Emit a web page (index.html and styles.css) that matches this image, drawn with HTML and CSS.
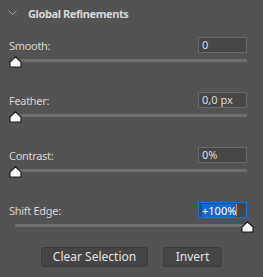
FILE: index.html
```html
<!DOCTYPE html>
<html lang="en">
  <head>
    <meta charset="UTF-8" />
    <title>Global Refinements</title>
    <link rel="stylesheet" href="styles.css">
  </head>
  <body>
    <div class="panel">
      <div class="header">
        <svg class="chevron" width="9" height="6" viewBox="0 0 9 6"><path d="M0.5 0.5 L4.5 4.5 L8.5 0.5" fill="none" stroke="#a8a8a8" stroke-width="0.9"/></svg>
        <span class="title">Global Refinements</span>
      </div>

      <div class="group">
        <div class="row">
          <label>Smooth:</label>
          <div class="field">0</div>
        </div>
        <div class="slider">
          <div class="track"></div>
          <svg class="thumb" style="left:0px" width="13" height="12" viewBox="0 0 13 12"><path d="M6.5 0.8 L12 6 L12 11.2 L1 11.2 L1 6 Z" fill="#fff" stroke="#1e1e1e" stroke-width="1.2" stroke-linejoin="round"/></svg>
        </div>
      </div>

      <div class="group">
        <div class="row">
          <label>Feather:</label>
          <div class="field">0,0 px</div>
        </div>
        <div class="slider">
          <div class="track"></div>
          <svg class="thumb" style="left:0px" width="13" height="12" viewBox="0 0 13 12"><path d="M6.5 0.8 L12 6 L12 11.2 L1 11.2 L1 6 Z" fill="#fff" stroke="#1e1e1e" stroke-width="1.2" stroke-linejoin="round"/></svg>
        </div>
      </div>

      <div class="group">
        <div class="row">
          <label>Contrast:</label>
          <div class="field">0%</div>
        </div>
        <div class="slider">
          <div class="track"></div>
          <svg class="thumb" style="left:0px" width="13" height="12" viewBox="0 0 13 12"><path d="M6.5 0.8 L12 6 L12 11.2 L1 11.2 L1 6 Z" fill="#fff" stroke="#1e1e1e" stroke-width="1.2" stroke-linejoin="round"/></svg>
        </div>
      </div>

      <div class="group last">
        <div class="row">
          <label>Shift Edge:</label>
          <div class="field active"><span class="sel">+100%</span><span class="caret"></span></div>
        </div>
        <div class="slider">
          <div class="track"></div>
          <svg class="thumb" style="left:232px" width="13" height="12" viewBox="0 0 13 12"><path d="M6.5 0.8 L12 6 L12 11.2 L1 11.2 L1 6 Z" fill="#fff" stroke="#1e1e1e" stroke-width="1.2" stroke-linejoin="round"/></svg>
        </div>
      </div>

      <div class="buttons">
        <button class="btn wide">Clear Selection</button>
        <button class="btn">Invert</button>
      </div>
    </div>
  </body>
</html>
```

FILE: styles.css
```css
body {
  margin: 0;
  background: #535353;
  font-family: "Noto Sans", sans-serif;
  font-size: 11px;
  color: #d4d4d4;
}
.panel {
  width: 263px;
  height: 277px;
  padding: 0 16px 0 9px;
  box-sizing: border-box;
}
.header {
  height: 26px;
  display: flex;
  align-items: center;
}
.chevron {
  margin-left: -1px;
  margin-right: 11px;
}
.title {
  font-weight: bold;
  font-size: 11px;
  letter-spacing: -0.4px;
  color: #d8d8d8;
}
label {
  letter-spacing: -0.3px;
}
.group {
  margin-top: 11px;
}
.group + .group {
  margin-top: 25px;
}
.row {
  display: flex;
  justify-content: space-between;
  align-items: center;
  height: 16px;
}
.field {
  width: 49px;
  height: 16px;
  box-sizing: border-box;
  border: 1px solid #6a6a6a;
  background: #474747;
  padding: 0 3px;
  line-height: 14px;
  color: #dcdcdc;
  display: flex;
  align-items: center;
}
.field.active {
  border-color: #1473e6;
}
.sel {
  background: #1568d4;
  color: #fff;
  line-height: 13px;
}
.caret {
  width: 1px;
  height: 12px;
  background: #f08a24;
}
.slider {
  position: relative;
  height: 14px;
}
.track {
  position: absolute;
  left: 6px;
  right: 0;
  top: 6px;
  height: 3px;
  background: #6e6e6e;
}
.thumb {
  position: absolute;
  top: 3px;
}
.buttons {
  display: flex;
  justify-content: center;
  gap: 15px;
  margin: 15px -16px 0 -9px;
}
.btn {
  height: 20px;
  width: 59px;
  padding: 0;
  border: 1px solid #3c3c3c;
  border-radius: 3px;
  background: #454545;
  color: #e2e2e2;
  font-family: "Noto Sans", sans-serif;
  font-size: 12px;
  line-height: 18px;
}
.btn.wide {
  width: 107px;
}
```
